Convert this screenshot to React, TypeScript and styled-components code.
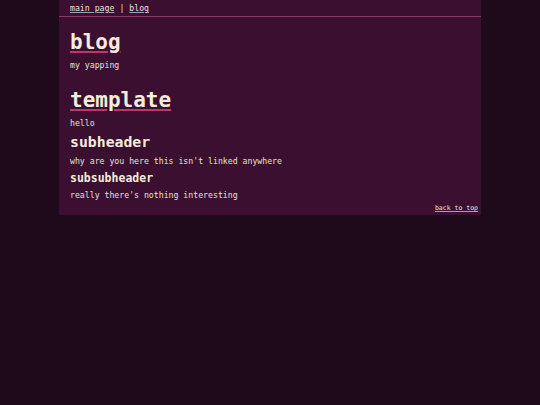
import React from "react";
import styled, { createGlobalStyle } from "styled-components";

const Global = createGlobalStyle`
  html, body {
    margin: 0;
    padding: 0;
    background: #1f0a1b;
    min-height: 100%;
  }
  body {
    font-family: "DejaVu Sans Mono", "Liberation Mono", monospace;
    color: #e8e0dc;
  }
`;

const Page = styled.div`
  width: 422px;
  margin: 0 auto;
  background: #3a0f30;
`;

const Nav = styled.nav`
  height: 16px;
  padding: 0 11px;
  display: flex;
  align-items: center;
  gap: 5px;
  font-size: 8.2px;
  border-bottom: 1px solid #8c3a6e;
`;

const NavLink = styled.a`
  color: #ece4dc;
  text-decoration: underline;
  text-decoration-color: #9aa0c8;
`;

const Main = styled.main`
  padding: 12px 11px 0;
`;

const Title = styled.h1`
  margin: 0;
  font-size: 21px;
  line-height: 26px;
  font-weight: bold;
  color: #f5ecdc;
  text-decoration: underline;
  text-decoration-color: #c0356a;
  text-decoration-thickness: 2px;
  text-underline-offset: 2px;
`;

const Sub = styled.h2<{ $size: number }>`
  margin: 0;
  font-size: ${(p) => p.$size}px;
  line-height: ${(p) => Math.round(p.$size * 1.2)}px;
  font-weight: bold;
  color: #f5ecdc;
`;

const Text = styled.p<{ $after?: number }>`
  margin: 4px 0 ${(p) => p.$after ?? 0}px;
  font-size: 8.2px;
  line-height: 12px;
`;

const Footer = styled.footer`
  display: flex;
  justify-content: flex-end;
  padding: 3px 3px 3px 0;
`;

const TopLink = styled.a`
  font-size: 6.5px;
  color: #ece4dc;
  text-decoration: underline;
  text-decoration-color: #9aa0c8;
`;

export default function App() {
  return (
    <>
      <Global />
      <Page id="top">
        <Nav>
          <NavLink href="#">main page</NavLink>
          <span>|</span>
          <NavLink href="#">blog</NavLink>
        </Nav>
        <Main>
          <Title>blog</Title>
          <Text $after={16}>my yapping</Text>
          <Title>template</Title>
          <Text $after={4}>hello</Text>
          <Sub $size={14.8}>subheader</Sub>
          <Text $after={4}>why are you here this isn't linked anywhere</Text>
          <Sub $size={11.5}>subsubheader</Sub>
          <Text>really there's nothing interesting</Text>
        </Main>
        <Footer>
          <TopLink href="#top">back to top</TopLink>
        </Footer>
      </Page>
    </>
  );
}
